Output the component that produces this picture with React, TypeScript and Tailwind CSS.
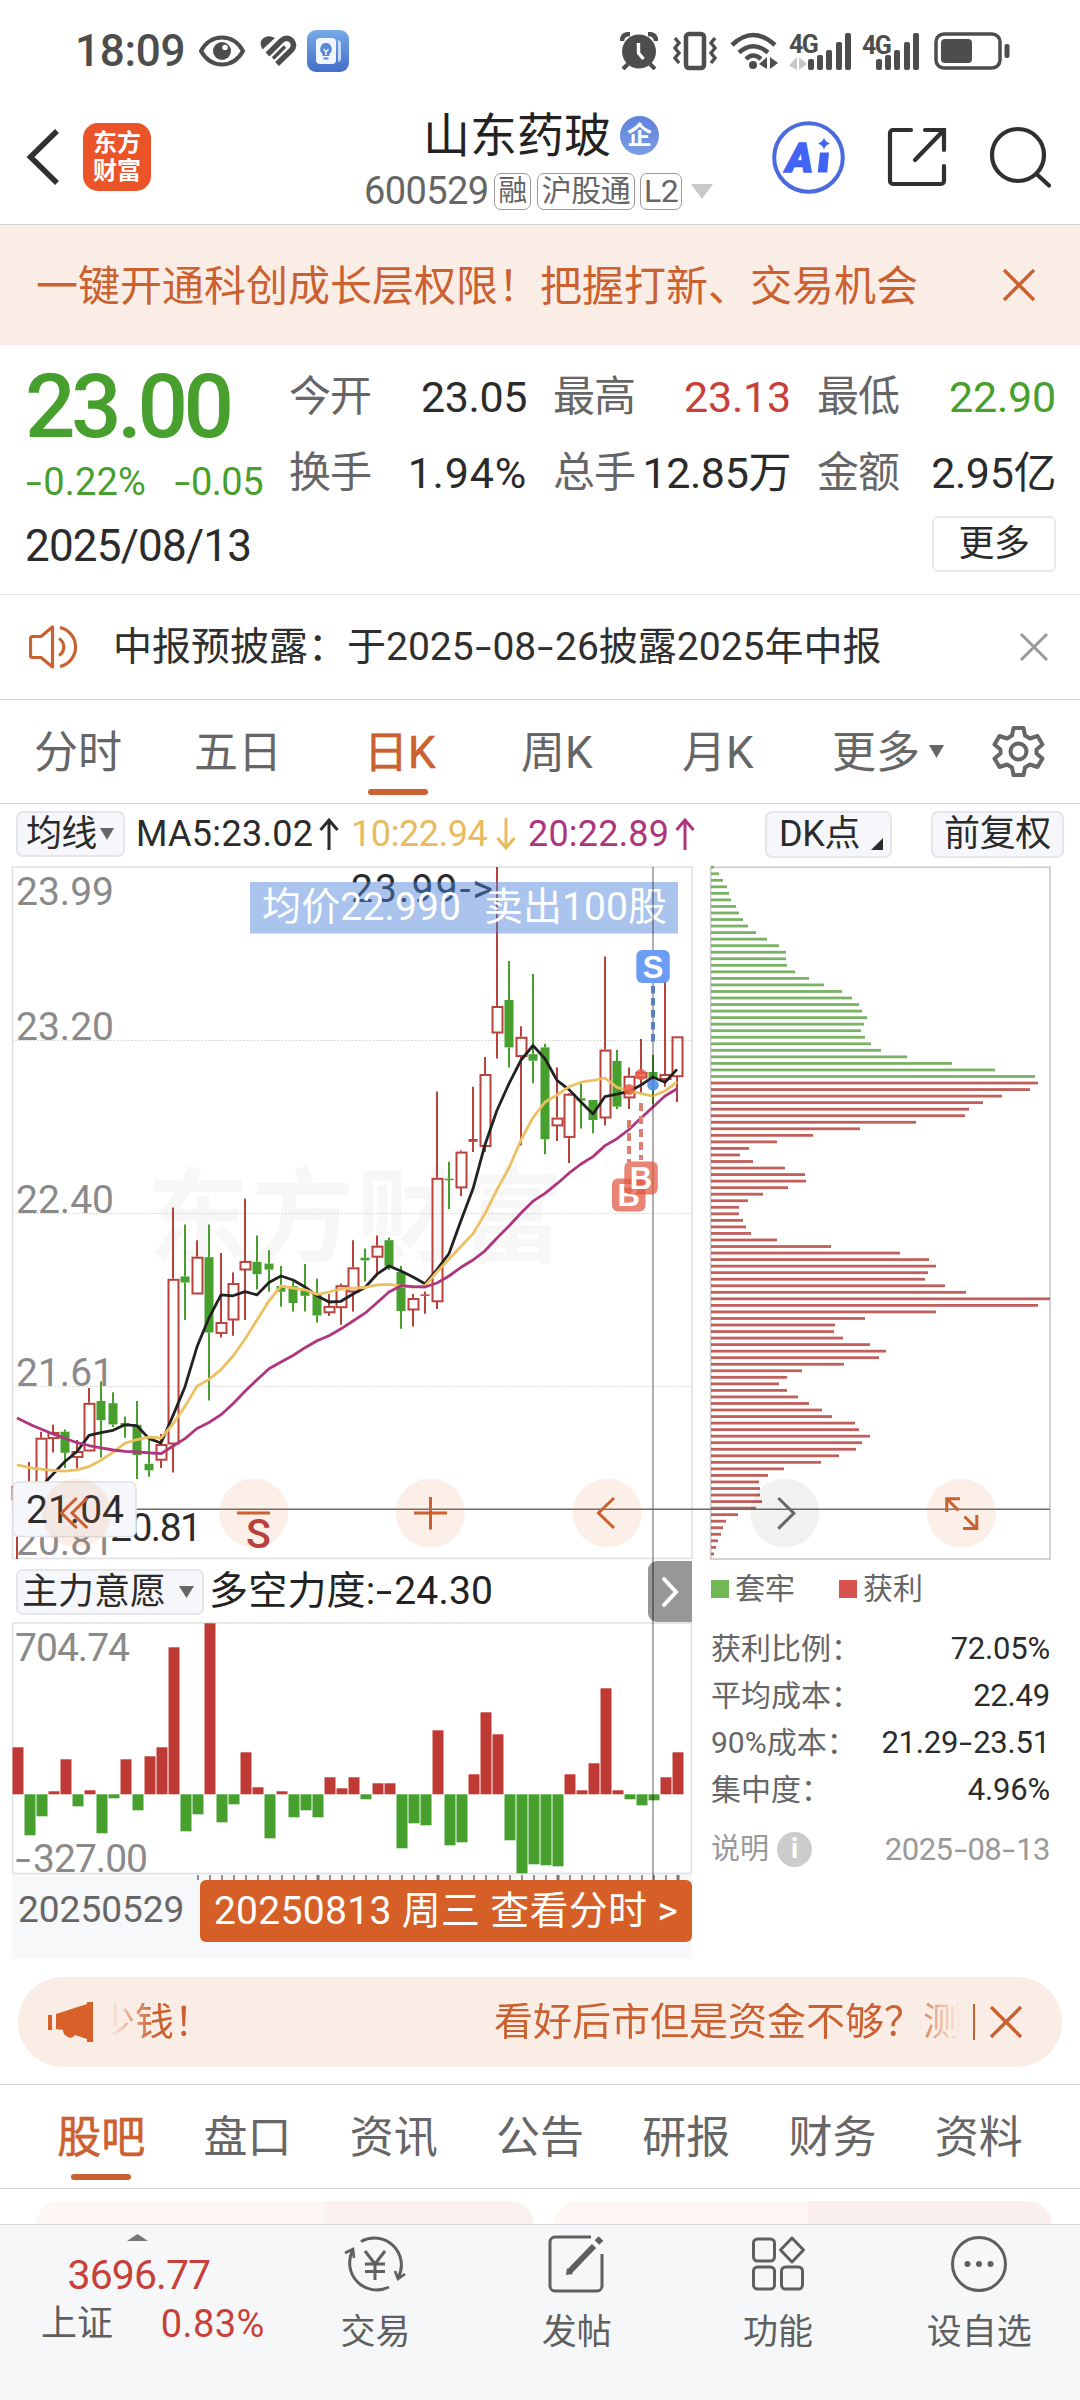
import type { ReactNode } from 'react';
import clsx from 'clsx';

const RED = '#b8423c';
const GREEN = '#479f2e';
const ORANGE = '#cb6130';

// [up, high, bodyTop, bodyBottom, low], one entry per trading day
type Candle = [0 | 1, number, number, number, number];

const CANDLES: Candle[] = [
  [1, 1484, 1486, 1500, 1559],
  [1, 1462, 1485, 1500, 1505],
  [1, 1431.7, 1437.7, 1495, 1500],
  [1, 1424.8, 1432, 1438.6, 1452.4],
  [0, 1429.4, 1431.7, 1452.8, 1468],
  [1, 1440, 1451, 1457.4, 1468.4],
  [1, 1388, 1402.8, 1451, 1451],
  [0, 1381.2, 1401, 1420.2, 1457.4],
  [0, 1392.2, 1403.2, 1424.4, 1427],
  [0, 1416.6, 1423, 1425, 1437.7],
  [0, 1401, 1424.8, 1455, 1479],
  [0, 1439.5, 1463.8, 1470.3, 1476.7],
  [1, 1434, 1444, 1460.2, 1468],
  [1, 1207.6, 1278.8, 1444, 1472.6],
  [0, 1224.6, 1276.5, 1282.5, 1320],
  [1, 1240.2, 1256.7, 1294, 1294],
  [0, 1224.6, 1257.2, 1332.5, 1400.5],
  [1, 1253, 1322, 1333.4, 1337.6],
  [1, 1272.4, 1283, 1320, 1335.7],
  [1, 1198.4, 1260.9, 1270, 1320],
  [0, 1235.6, 1261.8, 1274.2, 1289.4],
  [0, 1250.3, 1263.6, 1269.6, 1291.7],
  [0, 1266, 1286, 1291.7, 1306.8],
  [0, 1281.5, 1286, 1303, 1311.4],
  [0, 1264, 1290.3, 1295.8, 1311.4],
  [0, 1278.8, 1294, 1315.5, 1322.4],
  [1, 1294, 1305.9, 1312.8, 1316],
  [1, 1283.4, 1285.2, 1307.7, 1324.7],
  [1, 1240.2, 1267.3, 1292, 1311.4],
  [0, 1248.5, 1257.7, 1260.4, 1281.5],
  [1, 1235.6, 1245.7, 1257.2, 1274.2],
  [0, 1237.5, 1240.2, 1266.4, 1270],
  [0, 1266, 1271.9, 1311, 1328.8],
  [1, 1294, 1298, 1310, 1326.5],
  [1, 1291.6, 1294.4, 1295.8, 1313.7],
  [1, 1091.4, 1177.8, 1301.8, 1309],
  [0, 1161.7, 1178.7, 1180, 1209],
  [1, 1150.2, 1151.6, 1187.9, 1196],
  [1, 1086.8, 1139, 1141.800, 1152],
  [1, 1057, 1074, 1146.5, 1152],
  [1, 867, 1006, 1033, 1058.4],
  [0, 961, 1000, 1047.4, 1067.6],
  [1, 1026.2, 1036.8, 1056.5, 1145.6],
  [0, 973.9, 1054.2, 1060.7, 1083.2],
  [0, 1043.7, 1047.4, 1139.2, 1154.3],
  [1, 1067.6, 1117.6, 1125.9, 1141],
  [1, 1093, 1093.7, 1137.4, 1163],
  [0, 1083.2, 1098.3, 1100.6, 1128.6],
  [0, 1100, 1100, 1120, 1133.2],
  [1, 956.4, 1049.6, 1118, 1125.4],
  [0, 1050, 1061, 1106.6, 1109],
  [1, 1067.6, 1075.8, 1097.9, 1109],
  [1, 1039, 1072, 1078, 1094],
  [0, 1054.7, 1072, 1078, 1104.3],
  [1, 980.3, 1074, 1079.5, 1086.8],
  [1, 1036.3, 1036.3, 1076.7, 1102],
];

const MA5 =
  '45.7,1481.8 65,1461.5 77,1451.5 89,1435.4 101,1432.6 113,1430.3 125,1424.8 137,1425.7 149,1438.6 161,1443 173,1415.6 185,1386.7 197,1346.8 209,1317.8 221,1294.9 233,1295.8 245,1291.6 257,1294.9 269,1282.5 281,1276 293,1280 305,1287 317,1295.8 329,1302 341,1301.3 353,1294 365,1287.5 377,1274.2 389,1266 401,1271 413,1277 425,1283.8 437,1269.6 449,1253.5 461,1220.5 473,1188.8 485,1144.7 497,1110.3 509,1083.6 521,1060.2 533,1045.5 545,1058.8 557,1080.4 569,1089.6 581,1102 593,1114 605,1096.5 617,1094.2 629,1091.4 641,1085 653,1077.2 665,1082.2 677,1069.4';
const MA10 =
  '17,1464.8 33,1468.4 53,1470.3 65,1471.2 77,1469.8 89,1466.6 101,1460.2 113,1452.4 125,1443.2 137,1439.5 149,1437.2 161,1438 173,1424 185,1406.4 197,1386.2 209,1379.4 221,1369.7 233,1356 245,1339 257,1320 269,1300.8 281,1286 293,1288 305,1289.8 317,1294.4 329,1292 341,1289 365,1287.5 377,1284.8 389,1284.3 401,1286 413,1287 425,1285.7 437,1271.9 449,1259 473,1233.8 485,1213.6 497,1189.7 509,1167.7 521,1140 533,1117.6 545,1102 557,1095 569,1086.8 581,1082.2 593,1080.4 605,1078 617,1087.3 629,1090.5 641,1093.7 653,1096 665,1091 677,1082.2';
const MA20 =
  '17,1418 33,1425.7 53,1434 77,1442.7 89,1445.5 101,1447.8 113,1450 125,1451.4 137,1452 161,1453.7 173,1446 185,1438.6 197,1428.5 209,1422.5 221,1414.7 233,1403.7 245,1391.3 257,1379.8 269,1368.8 281,1362 293,1355.5 305,1347.7 317,1340.8 329,1335.7 341,1328.8 353,1321 365,1313.2 377,1302.7 389,1292 401,1285.7 413,1286.6 425,1287 437,1283 449,1276 461,1267.3 473,1260 485,1250.8 497,1238 509,1226 521,1213 533,1201.2 545,1193.4 557,1183.7 569,1173.2 581,1164 593,1156.6 605,1145.6 617,1138.7 629,1129.5 641,1118 653,1107 665,1096 677,1088.7';

// chip distribution, top price first; everything above the close is trapped
const TRAPPED = [
  3, 8, 12, 16, 18, 20, 25, 28, 32, 37, 45, 56, 68, 75, 75, 76, 84, 98, 113, 131, 141, 148, 151, 156, 153, 150, 154,
  160, 170, 196, 241, 284, 324,
];
const PROFIT = [
  327, 319, 291, 272, 258, 254, 205, 149, 102, 66, 38, 29, 42, 74, 94, 95, 77, 52, 37, 28, 28, 32, 35, 40, 66, 120,
  189, 218, 225, 217, 214, 234, 255, 339, 327, 225, 154, 124, 123, 132, 159, 175, 168, 133, 91, 76, 68, 76, 87, 98,
  111, 121, 144, 148, 159, 151, 145, 128, 110, 73, 57, 48, 49, 49, 51, 45, 27, 15, 12, 10, 7, 5, 3,
];

const FORCE = [
  47, -41, -22, 3, 35, -12, 4, -39, -4, 35, -16, 38, 47, 147, -37, -20, 171, -28, -10, 42, 7, -44, 3, -23, -16, -23,
  17, 6, 17, -5, 11, 11, -54, -29, -31, 64, -51, -48, 20, 82, 60, -46, -79, -70, -71, -72, 20, 4, 31, 106, 4, -5, -11,
  -6, 17, 42,
];

export default function App() {
  return (
    <div className="w-[1080px] h-[2400px] overflow-hidden bg-white text-[#2b2b2b] leading-none whitespace-nowrap font-['Roboto','Noto_Sans_CJK_SC',sans-serif]">
      <StatusBar />
      <Header />
      <div className="h-[120px] bg-[#faede5] flex items-center justify-between pl-9 pr-11 text-[#cb6130]">
        <span className="text-[42px] pt-[3px]">一键开通科创成长层权限！把握打新、交易机会</span>
        <Cross size={34} width={3.4} />
      </div>
      <Quote />
      <div className="h-[105px] border-b border-[#d8d8d8] flex items-center pl-[29px] pr-[31px]">
        <svg width="52" height="46" viewBox="0 0 52 46" fill="none" stroke={ORANGE} strokeWidth="3.2">
          <path d="M23.500 3v40L12 33.500H3.500a2 2 0 0 1-2-2V14.500a2 2 0 0 1 2-2H12z" strokeLinejoin="round" />
          <path d="M30 14.500a10 10 0 0 1 0 17M31 3.500a20 20 0 0 1 0 39" />
        </svg>
        <span className="ml-8 text-[39px] text-[#2f2f2f]">
          <Dashed text="中报预披露：于2025-08-26披露2025年中报" />
        </span>
        <span className="ml-auto text-[#999]">
          <Cross size={30} width={3} />
        </span>
      </div>
      <PeriodTabs />
      <MaBar />
      <MainChart />
      <div className="h-[416px] flex">
        <ForcePanel />
        <ChipStats />
      </div>
      <Promo />
      <SectionTabs />
      <div className="h-[35px] pt-3 pl-9 pr-7 flex gap-5 overflow-hidden">
        <div className="w-[498px] h-20 rounded-3xl bg-linear-to-r from-[#fdf7f3] from-58% to-[#fbf1ef] to-58%" />
        <div className="w-[498px] h-20 rounded-3xl bg-linear-to-r from-[#fdf6f3] from-51% to-[#fbefed] to-51%" />
      </div>
      <BottomNav />
    </div>
  );
}

function Cross({ size, width }: { size: number; width: number }) {
  return (
    <svg width={size} height={size} viewBox={`0 0 ${size} ${size}`} stroke="currentColor" strokeWidth={width}>
      <path d={`M2 2L${size - 2} ${size - 2}M${size - 2} 2L2 ${size - 2}`} />
    </svg>
  );
}

// hyphens are stretched to about the width of a digit
function Dashed({ text }: { text: string }) {
  return (
    <>
      {text.split(/(-)/).map((part, i) =>
        part === '-' ? (
          <span key={i} className="inline-block w-[0.48em] text-center scale-x-[1.5]">
            -
          </span>
        ) : (
          part
        ),
      )}
    </>
  );
}

function Signal({ heights }: { heights: number[] }) {
  return (
    <div className="flex items-end gap-[3.2px]">
      {heights.map((h) => (
        <div key={h} className="w-[6px] rounded-[2px] bg-[#4d4d4d]" style={{ height: h }} />
      ))}
    </div>
  );
}

function StatusBar() {
  return (
    <div className="h-[98px] flex items-center pt-1 pl-[75px] pr-[70px] text-[#4d4d4d]">
      <span className="w-[112px] text-[44px] font-medium tracking-[-0.3px]">18:09</span>
      <svg className="ml-3" width="46" height="32" viewBox="0 0 46 32">
        <path d="M2 16C12-2 34-2 44 16 34 34 12 34 2 16z" fill="none" stroke="#4d4d4d" strokeWidth="4" />
        <circle cx="23" cy="16" r="9" fill="#4d4d4d" />
        <circle cx="26" cy="12.500" r="2.800" fill="#fff" />
      </svg>
      <svg className="ml-[14px]" width="38" height="32" viewBox="0 0 38 32" fill="none" stroke="#4d4d4d">
        <path d="M3.500 14.500Q-1 6 5.500 2.500 10.500 0 16 3z" fill="#4d4d4d" stroke="none" />
        <path d="M8.500 19.500L22 6q6-5.500 11 0 3.500 5-1 9.500L18 29" strokeWidth="5.500" />
        <path d="M14 23.500L26 11.500" strokeWidth="3.500" />
      </svg>
      <svg className="ml-[10px]" width="42" height="42" viewBox="0 0 42 42">
        <defs>
          <linearGradient id="tips" x2="0" y2="1">
            <stop stopColor="#77aae6" />
            <stop offset="1" stopColor="#456dca" />
          </linearGradient>
        </defs>
        <rect width="42" height="42" rx="9" fill="url(#tips)" />
        <path d="M31 10q3 1 3 4v14q0 3-3 4z" fill="#c8dcf8" />
        <rect x="9" y="8" width="20" height="26" rx="4" fill="#f2f7ff" />
        <path d="M19 13a6 6 0 0 0-3.500 10.700V26h7v-2.300A6 6 0 0 0 19 13z" fill="#5a87d4" />
        <path d="M16.500 19l2.500 3 2.500-3M19 22v3" stroke="#fff" strokeWidth="1.300" fill="none" />
        <path d="M16.500 28.500h5" stroke="#5a87d4" strokeWidth="2" />
      </svg>
      <div className="ml-auto flex items-center">
        <svg width="38" height="38" viewBox="0 0 38 38">
          <path d="M2 9Q2 2 10 2M36 9Q36 2 28 2" fill="none" stroke="#4d4d4d" strokeWidth="4.500" />
          <circle cx="19" cy="19.500" r="17" fill="#4d4d4d" />
          <path d="M8 32l-5 5M30 32l5 5" stroke="#4d4d4d" strokeWidth="4" />
          <path d="M18.500 11v10l5 6" fill="none" stroke="#fff" strokeWidth="3.400" />
        </svg>
        <svg className="ml-[15px]" width="44" height="40" viewBox="0 0 44 40" fill="none" stroke="#4d4d4d">
          <rect x="13" y="3" width="18" height="34" rx="3" strokeWidth="4.500" />
          <path d="M2 7l4 5-4 5 4 5-4 5 4 5M42 7l-4 5 4 5-4 5 4 5-4 5" strokeWidth="3.400" />
        </svg>
        <svg className="ml-[13px]" width="48" height="38" viewBox="0 0 48 38" fill="none" stroke="#4d4d4d">
          <path d="M2 13Q23-7 45 13M9 20.500Q23 8 38 20.500M16 27Q23 20 31 27" strokeWidth="4.500" />
          <circle cx="23" cy="33" r="4" fill="#4d4d4d" stroke="none" />
          <path d="M37 25v12l-8-5zM40 25l8 6-8 6z" fill="#4d4d4d" stroke="none" />
        </svg>
        <div className="ml-[11px] w-[62px] flex items-end">
          <div className="w-[19px] flex flex-col">
            <span className="text-[25px] font-bold tracking-[-1.5px]">4G</span>
            <svg width="18" height="13" viewBox="0 0 18 13" fill="#c8c8c8">
              <path d="M8 0v13L0 8.500zM10 0l8 7-8 6z" />
            </svg>
          </div>
          <Signal heights={[11, 15, 20, 28, 37]} />
        </div>
        <div className="ml-[11px] w-[58px] flex items-end">
          <div className="w-[14px] self-start">
            <span className="text-[25px] font-bold tracking-[-1.5px]">4G</span>
          </div>
          <Signal heights={[11, 15, 20, 28, 37]} />
        </div>
        <svg className="ml-[14px]" width="76" height="38" viewBox="0 0 76 38">
          <rect x="2" y="2" width="64" height="34" rx="8" fill="none" stroke="#4d4d4d" strokeWidth="3.500" />
          <rect x="7" y="7" width="31" height="24" rx="4" fill="#4d4d4d" />
          <rect x="70.500" y="12" width="5" height="14" rx="2" fill="#4d4d4d" />
        </svg>
      </div>
    </div>
  );
}

function Header() {
  return (
    <div className="h-[127px] border-b border-[#d3d4da] flex">
      <div className="w-[364px] flex items-center pl-[26px] pb-2">
        <svg width="34" height="56" viewBox="0 0 34 56" fill="none" stroke="#303030" strokeWidth="5.500">
          <path d="M31 2L4.500 28 31 54" />
        </svg>
        <div className="ml-[23px] size-[68px] rounded-[15px] bg-[#ea5428] text-white text-[24px] font-bold leading-[28px] flex flex-col items-center justify-center">
          <span>东方</span>
          <span>财富</span>
        </div>
      </div>
      <div className="w-[350px] flex flex-col">
        <div className="flex items-center pl-[59px] mt-3 h-[50px]">
          <span className="text-[47px] text-[#222]">山东药玻</span>
          <span className="ml-[9px] size-[39px] rounded-full bg-linear-to-b from-[#5f83de] to-[#7c9ce2] text-white text-[25px] font-bold flex items-center justify-center">
            企
          </span>
        </div>
        <div className="flex items-center mt-3 text-[#666]">
          <span className="w-[130px] text-[38px] tracking-[-0.6px]">600529</span>
          <Tag className="w-[37px] text-[29px]">融</Tag>
          <Tag className="ml-[6px] w-[98px] text-[30px]">沪股通</Tag>
          <Tag className="ml-[5px] w-[42px] text-[32px]">L2</Tag>
          <svg className="ml-[9px]" width="22" height="15" viewBox="0 0 22 15" fill="#c9c9c9">
            <path d="M0 0h22L11 15z" />
          </svg>
        </div>
      </div>
      <div className="flex-1 flex items-center pb-2 pl-[58px]">
        <svg width="73" height="73" viewBox="0 0 73 73">
          <circle cx="36.500" cy="36.500" r="34.300" fill="none" stroke="#4a6ae0" strokeWidth="4" />
          <text
            x="14"
            y="51"
            fill="#4164f4"
            stroke="#4164f4"
            strokeWidth="1.500"
            className="font-['Roboto'] font-black italic text-[41px]"
          >
            A
          </text>
          <path d="M48 31.500h9l-1.800 20h-9.500z" fill="#4164f4" />
          <path d="M52 16.500q1.200 4.500 6 6-4.800 1.500-6 6-1.200-4.500-6-6 4.800-1.500 6-6z" fill="#4164f4" />
        </svg>
        <svg className="ml-[42px]" width="60" height="60" viewBox="0 0 60 60" fill="none" stroke="#303030" strokeWidth="4.200" strokeLinecap="round">
          <path d="M24 3H6a3 3 0 0 0-3 3v48a3 3 0 0 0 3 3h48a3 3 0 0 0 3-3V39M38 3h19v20M57 3L28 33" />
        </svg>
        <svg className="ml-[42px]" width="62" height="62" viewBox="0 0 62 62" fill="none" stroke="#303030" strokeWidth="4.200" strokeLinecap="round">
          <circle cx="29" cy="29" r="26" />
          <path d="M47.500 48L60 59.500" />
        </svg>
      </div>
    </div>
  );
}

function Tag({ className, children }: { className: string; children: ReactNode }) {
  return (
    <span
      className={clsx(
        'h-[37px] rounded-[7px] border-[1.5px] border-[#999] flex items-center justify-center tracking-[-0.5px]',
        className,
      )}
    >
      {children}
    </span>
  );
}

function Field({ label, value, className }: { label: string; value: string; className?: string }) {
  return (
    <div className="flex items-center justify-between h-[42px]">
      <span className="text-[42px] text-[#666] tracking-[-1px]">{label}</span>
      <span className={clsx('text-[43px]', className ?? 'tracking-[-0.4px]')}>{value}</span>
    </div>
  );
}

function Quote() {
  return (
    <div className="h-[250px] border-b border-[#e6e6e6] pl-[25px] pr-6">
      <div className="flex h-[155px]">
        <div className="w-[264px] text-[#479f2e]">
          <div className="mt-[17px] text-[89px] font-medium tracking-[-4.5px]">23.00</div>
          <div className="mt-[12px] flex justify-between pr-[26px] text-[38px]">
            <span className="tracking-[0.2px]">
              <Dashed text="-0.22%" />
            </span>
            <span className="tracking-[-0.5px]">
              <Dashed text="-0.05" />
            </span>
          </div>
        </div>
        <div className="w-[767px] pt-[31px] grid grid-cols-[238px_238px_239px] gap-x-[26px] gap-y-[34px] auto-rows-[42px]">
          <Field label="今开" value="23.05" />
          <Field label="最高" value="23.13" className="tracking-[-0.2px] text-[#c8403a]" />
          <Field label="最低" value="22.90" className="tracking-[-0.2px] text-[#479f2e]" />
          <Field label="换手" value="1.94%" className="tracking-[0.8px]" />
          <Field label="总手" value="12.85万" />
          <Field label="金额" value="2.95亿" />
        </div>
      </div>
      <div className="flex items-center justify-between mt-[16px]">
        <span className="text-[44px] tracking-[-0.8px] pt-[3px]">2025/08/13</span>
        <span className="w-[124px] h-[56px] rounded-[6px] border-2 border-[#e8e8e8] flex items-center justify-center text-[36px] tracking-[-0.5px]">
          更多
        </span>
      </div>
    </div>
  );
}

function PeriodTabs() {
  return (
    <div className="h-[104px] border-b border-[#d8d8d8] flex text-[44px] text-[#666] pl-[34px]">
      <Period className="w-[160px]">分时</Period>
      <Period className="w-[170px]">五日</Period>
      <div className="w-[157px] flex flex-col pt-[31px] text-[#cb6130]">
        <span className="[-webkit-text-stroke:0.6px_#cb6130]">日K</span>
        <span className="mt-[14px] ml-[4px] w-[60px] h-[6px] rounded-full bg-[#cb6130]" />
      </div>
      <Period className="w-[161px]">周K</Period>
      <Period className="w-[150px]">月K</Period>
      <div className="w-[160px] flex pt-[31px]">
        更多
        <svg className="ml-[9px] mt-[14px]" width="15" height="13" viewBox="0 0 15 13" fill="#666">
          <path d="M0 0h15L7.500 13z" />
        </svg>
      </div>
      <svg className="mt-[25px]" width="53" height="53" viewBox="0 0 53 53" fill="none" stroke="#666" strokeWidth="4">
        <path
          d="M21.500 3h10l1.500 7.500 5 3 7.500-2.500 5 8.500-6 5v4l6 5-5 8.500-7.500-2.500-5 3-1.500 7.500h-10L20 42.500l-5-3L7.500 42l-5-8.500 6-5v-4l-6-5 5-8.500 7.500 2.500 5-3z"
          strokeLinejoin="round"
        />
        <circle cx="26.500" cy="26.500" r="8" />
      </svg>
    </div>
  );
}

function Period({ className, children }: { className: string; children: ReactNode }) {
  return <div className={clsx('pt-[31px]', className)}>{children}</div>;
}

function Arrow({ up, color }: { up?: boolean; color: string }) {
  return (
    <svg width="20" height="34" viewBox="0 0 20 34" fill="none" stroke={color} strokeWidth="3">
      <path d={up ? 'M10 33V3M1.500 13L10 3l8.500 10' : 'M10 1v30M1.500 21l8.500 10 8.500-10'} />
    </svg>
  );
}

function MaBar() {
  return (
    <div className="h-[60px] flex items-center px-4 text-[36px] tracking-[-0.4px]">
      <span className="w-[109px] h-[46px] rounded-[7px] border-2 border-[#e4e6ea] bg-[#f6f7fa] flex items-center pl-2 tracking-[-0.8px]">
        均线
        <svg className="ml-1" width="14" height="12" viewBox="0 0 14 12" fill="#666">
          <path d="M0 0h14L7 12z" />
        </svg>
      </span>
      <span className="ml-[11px] w-[183px] tracking-[0.3px]">MA5:23.02</span>
      <Arrow up color="#2b2b2b" />
      <span className="ml-[12px] w-[145px] text-[#e9bb60]">10:22.94</span>
      <Arrow color="#e9bb60" />
      <span className="ml-[12px] w-[147px] tracking-[0.2px] text-[#ae357d]">20:22.89</span>
      <Arrow up color="#ae357d" />
      <span className="ml-auto w-[127px] h-[47px] rounded-[7px] border-2 border-[#e4e6ea] bg-[#f6f7fa] flex items-center pl-3">
        DK点
        <svg className="ml-[11px] mt-5" width="12" height="12" viewBox="0 0 12 12" fill="#2b2b2b">
          <path d="M12 0v12H0z" />
        </svg>
      </span>
      <span className="ml-[39px] w-[133px] h-[47px] rounded-[7px] border-2 border-[#e4e6ea] bg-[#f6f7fa] flex items-center justify-center">
        前复权
      </span>
    </div>
  );
}

function CandleMark({ candle, x }: { candle: Candle; x: number }) {
  const [up, high, top, bottom, low] = candle;
  const color = up ? RED : GREEN;
  const h = bottom - top;
  return (
    <g stroke={color} strokeWidth="2">
      <path d={`M${x} ${high}V${top}M${x} ${bottom}V${low}`} />
      {up && h > 3 ? (
        <rect x={x - 4.5} y={top + 1} width="10" height={h - 1.5} fill="none" />
      ) : (
        <rect x={x - 4.5} y={top} width="9" height={Math.max(h, 1.5)} fill={color} stroke="none" />
      )}
    </g>
  );
}

function TradeBadge({ x, y, label, fill }: { x: number; y: number; label: string; fill: string }) {
  return (
    <g>
      <rect x={x} y={y} width="33.500" height="33" rx="6" fill={fill} />
      <text x={x + 16.7} y={y + 27.5} textAnchor="middle" fill="#fff" className="font-['Liberation_Sans'] font-bold text-[31px]">
        {label}
      </text>
    </g>
  );
}

function MainChart() {
  return (
    <svg width="1080" height="697" viewBox="0 864 1080 697" className="block text-[39px]">
      <text x="147" y="1254" textLength="416" fill="#f7f7f7" className="font-bold text-[102px]">
        东方财富
      </text>
      <g stroke="#d9d9d9" strokeWidth="1" strokeDasharray="2 1.500">
        <path d="M12 1040.500H692M12 1213.500H692M12 1386.500H692" />
      </g>
      <rect x="12.500" y="867" width="679.500" height="691.500" fill="none" stroke="#e0e0e0" strokeWidth="1.600" />
      <g fill="#8a8a8a">
        <text x="16" y="904.500" textLength="98">23.99</text>
        <text x="16" y="1039.500" textLength="98">23.20</text>
        <text x="16" y="1213" textLength="98">22.40</text>
        <text x="16" y="1386" textLength="98">21.61</text>
        <text x="16" y="1555" textLength="98">20.81</text>
      </g>
      {CANDLES.map((c, i) => (
        <CandleMark key={i} candle={c} x={17 + i * 12} />
      ))}
      <g fill="none" strokeWidth="2.800" strokeLinejoin="round">
        <polyline points={MA5} stroke="#222" />
        <polyline points={MA10} stroke="#ecc063" />
        <polyline points={MA20} stroke="#b0357f" />
      </g>

      <text x="351" y="902" textLength="142" fill="#2b2b2b">
        23.99-&gt;
      </text>
      <rect x="250" y="882" width="428" height="51.500" fill="#4a82d9" fillOpacity="0.47" />
      <g fill="#fff">
        <text x="262" y="920" textLength="199">均价22.990</text>
        <text x="484" y="920" textLength="183">卖出100股</text>
      </g>

      <path d="M653 867V1561" stroke="#000" strokeOpacity="0.35" strokeWidth="1.800" />
      <path d="M653 986V1045" stroke="#5880c2" strokeWidth="4" strokeDasharray="7.500 4.500" />
      <path d="M629 1120V1162M641 1103V1160" stroke="#dd8073" strokeWidth="4" strokeDasharray="8 5" />
      <circle cx="629" cy="1089.500" r="5.500" fill="#ea5a45" fillOpacity="0.85" />
      <circle cx="641" cy="1074.500" r="5.500" fill="#ea5a45" fillOpacity="0.85" />
      <circle cx="653" cy="1085" r="5.800" fill="#4f8fe8" fillOpacity="0.9" />
      <TradeBadge x={636.3} y={950} label="S" fill="#6c9df4" />
      <TradeBadge x={612} y={1178.5} label="B" fill="rgba(226,86,64,0.72)" />
      <TradeBadge x={624.3} y={1161.5} label="B" fill="rgba(226,86,64,0.72)" />

      <rect x="710.700" y="867.300" width="339.300" height="691.700" fill="none" stroke="#c9c9c9" strokeWidth="1.600" />
      {[...TRAPPED, ...PROFIT].map((w, i) => (
        <rect
          key={i}
          x="711"
          y={865.8 + i * 6.54}
          width={w}
          height="2.800"
          fill={i < TRAPPED.length ? '#7bb366' : '#c15f5b'}
        />
      ))}

      <text x="110" y="1540.500" textLength="92" fill="#2b2b2b">
        20.81
      </text>
      <path d="M12 1509.300H1050" stroke="#6b6b6b" strokeWidth="1.400" />
      <rect x="13" y="1482" width="123" height="54.500" rx="6" fill="#f6f7fa" stroke="#dfe1e5" strokeWidth="1.500" />
      <text x="26" y="1522.500" textLength="98" fill="#2b2b2b">
        21.04
      </text>
      <g fill="#e07a40" fillOpacity="0.12">
        <circle cx="76.500" cy="1513" r="34.500" />
        <circle cx="253.700" cy="1513" r="34.500" />
        <circle cx="430.300" cy="1513" r="34.500" />
        <circle cx="607.300" cy="1513" r="34.500" />
        <circle cx="961.300" cy="1513" r="34.500" />
      </g>
      <circle cx="784.700" cy="1513" r="34.500" fillOpacity="0.055" />
      <g fill="none" stroke={ORANGE} strokeWidth="3">
        <path d="M76.700 1498L61.500 1513l15.200 15M87.300 1498L72 1513l15.300 15" />
        <path d="M237 1513h33" />
        <path d="M414 1513h33M430.500 1497v32.500" />
        <path d="M614 1498L598.500 1513l15.500 15" />
        <path d="M960 1498.700H946.700V1512M947 1499l11.500 11.500M964.500 1516.500l12 12M963 1528.500h13.800V1515" />
      </g>
      <path d="M778.300 1498l15.500 15.300-15.500 15.300" fill="none" stroke="#666" strokeWidth="3" />
      <text x="258.500" y="1547.500" textAnchor="middle" fill={RED} className="text-[41px] font-medium">
        S
      </text>
    </svg>
  );
}

function ForcePanel() {
  return (
    <div className="w-[692px] pl-3">
      <div className="relative h-[61px] flex items-center text-[36px] pl-[4px]">
        <span className="w-[188px] h-[46px] rounded-[7px] border-2 border-[#e4e6ea] bg-[#f6f7fa] flex items-center pl-[4px]">
          主力意愿
          <svg className="ml-[13px]" width="15" height="12" viewBox="0 0 15 12" fill="#666">
            <path d="M0 0h15L7.500 12z" />
          </svg>
        </span>
        <span className="ml-[5px] text-[39px] tracking-[0.2px] text-[#222]">
          <Dashed text="多空力度:-24.30" />
        </span>
        <div className="ml-auto w-11 h-[61px] rounded-l-[9px] bg-[#979797] flex items-center justify-center">
          <svg width="18" height="32" viewBox="0 0 18 32" fill="none" stroke="#fff" strokeWidth="4" strokeLinecap="round">
            <path d="M3 3l12 13L3 29" />
          </svg>
        </div>
        <div className="absolute left-[640px] top-0 w-[2px] h-full bg-black/35" />
      </div>
      <svg width="680" height="258" viewBox="12 1622 680 258" className="block bg-white text-[39px]">
        <rect x="12" y="1874" width="680" height="6" fill="#f7f8fa" />
        <rect x="12.500" y="1623" width="679" height="250.500" fill="none" stroke="#e0e0e0" strokeWidth="1.600" />
        {FORCE.map((v, i) => (
          <rect
            key={i}
            x={12.5 + i * 12}
            y={v > 0 ? 1794.3 - v : 1794.3}
            width="11"
            height={Math.abs(v)}
            fill={v > 0 ? '#c03a35' : GREEN}
          />
        ))}
        <g fill="#8a8a8a">
          <text x="15" y="1661" textLength="115">704.74</text>
          <text x="33" y="1872" textLength="115">327.00</text>
          <text transform="translate(15.500 1872) scale(1.400 1)">-</text>
        </g>
        {Array.from({ length: 41 }, (_, i) => (
          <path key={i} d={`M${198 + i * 12} 1875v5`} stroke="#777" strokeWidth={i % 10 === 0 && i > 0 ? 3 : 1.6} />
        ))}
        <path d="M653 1622V1880" stroke="#000" strokeOpacity="0.35" strokeWidth="1.800" />
      </svg>
      <div className="h-[79px] bg-[#f7f8fa] flex items-start pl-[6px]">
        <span className="mt-[11px] w-[182px] text-[37px] text-[#666]">20250529</span>
        <div className="w-[492px] h-[62px] rounded-[6px] bg-[#d65f27] text-white text-[39px] tracking-[0.3px] flex items-center justify-center">
          20250813 周三 查看分时 &gt;
        </div>
      </div>
    </div>
  );
}

const STATS = [
  ['获利比例：', '72.05%'],
  ['平均成本：', '22.49'],
  ['90%成本：', '21.29-23.51'],
  ['集中度：', '4.96%'],
];

function ChipStats() {
  return (
    <div className="w-[358px] pl-[19px] pt-[12px] text-[30px] text-[#666]">
      <div className="flex items-center h-8">
        <span className="size-[18px] bg-[#73b856]" />
        <span className="ml-[6px]">套牢</span>
        <span className="ml-[44px] size-[18px] bg-[#d8534f]" />
        <span className="ml-[6px]">获利</span>
      </div>
      <div className="mt-[20px]">
        {STATS.map(([label, value]) => (
          <div key={label} className="flex items-center justify-between h-[47px]">
            <span>{label}</span>
            <span className="text-[31px] text-[#2b2b2b] tracking-[-0.2px]">
              <Dashed text={value} />
            </span>
          </div>
        ))}
      </div>
      <div className="mt-[13px] h-[47px] flex items-center text-[#999]">
        <span className="text-[29px]">说明</span>
        <span className="ml-[8px] size-[35px] rounded-full bg-[#ccc] text-white text-[27px] font-bold flex items-center justify-center">
          i
        </span>
        <span className="ml-auto text-[31px] tracking-[-0.5px]">
          <Dashed text="2025-08-13" />
        </span>
      </div>
    </div>
  );
}

function Promo() {
  return (
    <div className="mx-[18px] h-[90px] rounded-full bg-[#faede5] flex items-center pl-[30px] pr-[39px] text-[39px] text-[#cb6130]">
      <svg width="46" height="40" viewBox="0 0 46 40" fill="#d8602a">
        <path d="M0 13h4v15H0zM8 12L39 2V0h6v40h-6v-3l-12-4q-3 4-7 2-5-2-5-7L8 27z" />
      </svg>
      <div className="ml-4 w-[850px] shrink-0 flex overflow-hidden mask-r-from-94% mask-r-to-100%">
        <div className="w-[393px] shrink-0 flex mask-l-from-89% mask-l-to-100%">
          <span className="ml-[-14px]">少钱！</span>
        </div>
        <span className="-ml-[9px] shrink-0">看好后市但是资金不够？</span>
        <span className="shrink-0">测</span>
      </div>
      <span className="ml-[13px] w-[1.5px] h-9 bg-[#cb6130]" />
      <span className="ml-auto">
        <Cross size={34} width={3.4} />
      </span>
    </div>
  );
}

const SECTIONS = ['股吧', '盘口', '资讯', '公告', '研报', '财务', '资料'];

function SectionTabs() {
  return (
    <div className="mt-[17px] h-[105px] border-y border-[#d8d8d8] flex px-[28px] text-[44px] text-[#666]">
      {SECTIONS.map((name, i) => (
        <div
          key={name}
          className={clsx(
            'flex-1 flex flex-col items-center pt-[31px]',
            i === 0 && 'text-[#cb6130] [-webkit-text-stroke:0.6px_#cb6130]',
          )}
        >
          {name}
          {i === 0 && <span className="mt-[14px] w-[60px] h-[6px] rounded-full bg-[#cb6130]" />}
        </div>
      ))}
    </div>
  );
}

function NavItem({ label, children }: { label: string; children: ReactNode }) {
  return (
    <div className="w-[201.5px] flex flex-col items-center pt-[8px]">
      <svg width="66" height="62" viewBox="0 0 66 62" fill="none" stroke="#5f5f5f" strokeWidth="3">
        {children}
      </svg>
      <span className="mt-[20px] text-[35px]">{label}</span>
    </div>
  );
}

function BottomNav() {
  return (
    <div className="h-[176px] border-t border-[#d6d7db] bg-[#f6f7f9] flex text-[#5f5f5f]">
      <div className="w-[275px] flex flex-col items-center">
        <svg className="mt-[9px]" width="21" height="7" viewBox="0 0 21 7" fill="#777">
          <path d="M0 7L10.500 0 21 7z" />
        </svg>
        <span className="mt-[14px] ml-[3px] text-[41px] text-[#c8403a] tracking-[-0.9px]">3696.77</span>
        <div className="mt-[9px] w-full flex items-center justify-between pl-[41px] pr-[10px]">
          <span className="text-[36px]">上证</span>
          <span className="text-[38px] tracking-[0.4px] text-[#c8403a]">0.83%</span>
        </div>
      </div>
      <NavItem label="交易">
        <path d="M19 8.500A27 27 0 0 1 56 45M47 54A27 27 0 0 1 11 17" />
        <path d="M3 20l8-4 1 9M63 41l-7 5-3-8" strokeWidth="2.600" />
        <path d="M23 18l10 13 10-13M33 31v16M23 31h20M23 38.500h20" />
      </NavItem>
      <NavItem label="发帖">
        <path d="M47 4H11a5 5 0 0 0-5 5v44a5 5 0 0 0 5 5h42a5 5 0 0 0 5-5V21" />
        <path d="M25 39L50 13" strokeWidth="6" />
        <path d="M53 9.500l4-4" strokeWidth="6.500" />
        <path d="M22 42l1-7 6 6z" fill="#5f5f5f" stroke="none" />
      </NavItem>
      <NavItem label="功能">
        <rect x="8.500" y="6" width="21" height="22" rx="4" />
        <rect x="8.500" y="34" width="21" height="22" rx="4" />
        <rect x="36.500" y="34" width="21" height="22" rx="4" />
        <path d="M47 5l11.500 12L47 29 35.500 17z" strokeLinejoin="round" />
      </NavItem>
      <NavItem label="设自选">
        <circle cx="33" cy="31" r="26.500" />
        <g fill="#5f5f5f" stroke="none">
          <circle cx="21.500" cy="31" r="3" />
          <circle cx="33" cy="31" r="3" />
          <circle cx="44.500" cy="31" r="3" />
        </g>
      </NavItem>
    </div>
  );
}
